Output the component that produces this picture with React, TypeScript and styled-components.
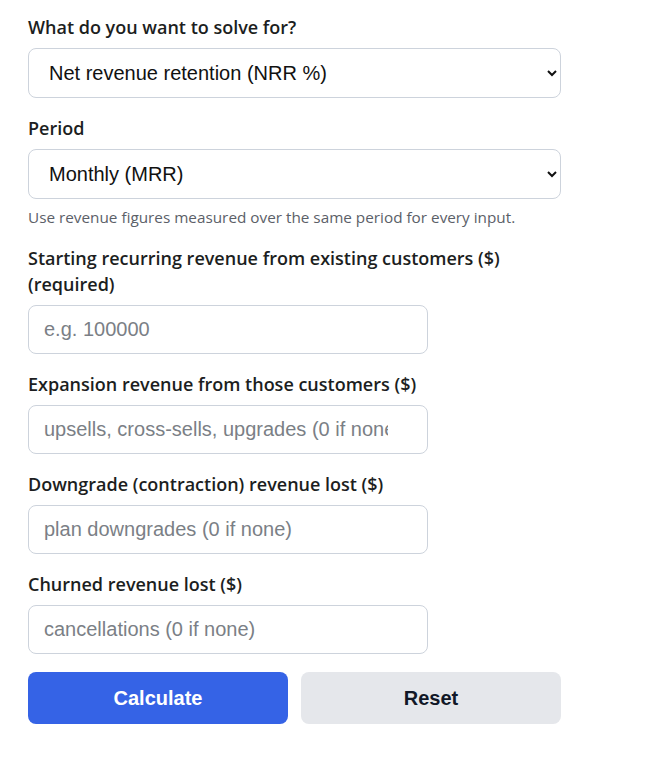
import React from 'react';
import styled, { createGlobalStyle } from 'styled-components';

const GlobalStyle = createGlobalStyle`
  body {
    margin: 0;
    background: #ffffff;
    font-family: 'Open Sans', 'Noto Sans', sans-serif;
    color: #1f2328;
  }
`;

const Form = styled.form`
  width: 533px;
  padding: 14px 0 40px 28px;
  display: flex;
  flex-direction: column;
`;

const Field = styled.div`
  display: flex;
  flex-direction: column;
  gap: 8px;
  margin-bottom: 17px;
`;

const Label = styled.label`
  font-size: 18px;
  font-weight: 600;
  line-height: 26px;
  color: #1c1e21;
`;

const Select = styled.select`
  width: 533px;
  height: 50px;
  box-sizing: border-box;
  padding: 0 10px 0 16px;
  font-family: 'Liberation Sans', Arial, sans-serif;
  font-size: 20px;
  color: #111;
  background: #fff;
  border: 1px solid #cdd3dc;
  border-radius: 8px;
`;

const Input = styled.input`
  width: 400px;
  height: 49px;
  box-sizing: border-box;
  padding: 0 24px 0 15px;
  font-family: 'Liberation Sans', Arial, sans-serif;
  font-size: 20px;
  color: #111;
  border: 1px solid #cdd3dc;
  border-radius: 8px;

  &::placeholder {
    color: #7b7f86;
  }
`;

const Hint = styled.p`
  margin: 0;
  font-size: 15.3px;
  line-height: 21px;
  color: #5b6068;
`;

const Buttons = styled.div`
  display: grid;
  grid-template-columns: 1fr 1fr;
  gap: 13px;
  margin-top: 1px;
`;

const Button = styled.button<{ $primary?: boolean }>`
  height: 52px;
  border: none;
  border-radius: 8px;
  font-family: 'Liberation Sans', Arial, sans-serif;
  font-size: 20px;
  font-weight: 700;
  cursor: pointer;
  background: ${(p) => (p.$primary ? '#3563e6' : '#e5e7eb')};
  color: ${(p) => (p.$primary ? '#ffffff' : '#111827')};
`;

const inputs = [
  { id: 'start', label: 'Starting recurring revenue from existing customers ($) (required)', placeholder: 'e.g. 100000' },
  { id: 'exp', label: 'Expansion revenue from those customers ($)', placeholder: 'upsells, cross-sells, upgrades (0 if none)' },
  { id: 'down', label: 'Downgrade (contraction) revenue lost ($)', placeholder: 'plan downgrades (0 if none)' },
  { id: 'churn', label: 'Churned revenue lost ($)', placeholder: 'cancellations (0 if none)' },
];

export default function App() {
  return (
    <>
      <GlobalStyle />
      <Form onSubmit={(e) => e.preventDefault()}>
        <Field>
          <Label htmlFor="solve">What do you want to solve for?</Label>
          <Select id="solve" defaultValue="nrr">
            <option value="nrr">Net revenue retention (NRR %)</option>
            <option value="grr">Gross revenue retention (GRR %)</option>
          </Select>
        </Field>
        <Field>
          <Label htmlFor="period">Period</Label>
          <Select id="period" defaultValue="m">
            <option value="m">Monthly (MRR)</option>
            <option value="y">Annual (ARR)</option>
          </Select>
          <Hint>Use revenue figures measured over the same period for every input.</Hint>
        </Field>
        {inputs.map((f) => (
          <Field key={f.id}>
            <Label htmlFor={f.id}>{f.label}</Label>
            <Input id={f.id} type="number" placeholder={f.placeholder} />
          </Field>
        ))}
        <Buttons>
          <Button type="submit" $primary>
            Calculate
          </Button>
          <Button type="button">Reset</Button>
        </Buttons>
      </Form>
    </>
  );
}
